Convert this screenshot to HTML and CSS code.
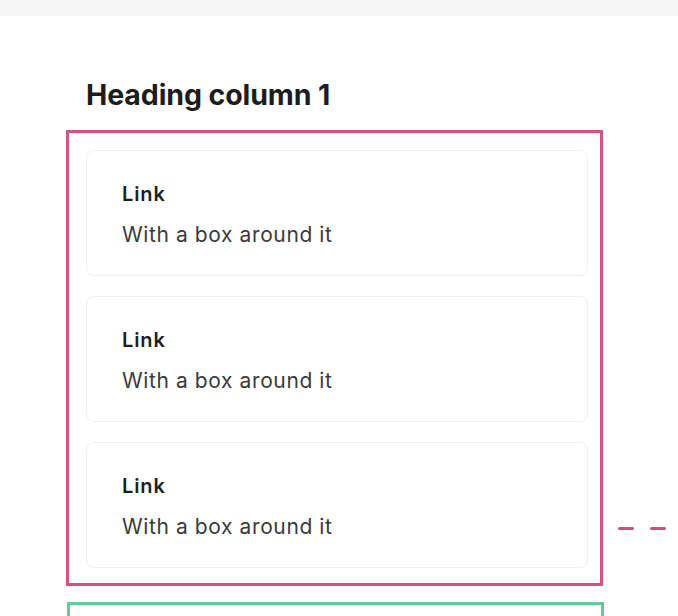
FILE: index.html
```html
<!DOCTYPE html>
<html lang="en">
<head>
<meta charset="utf-8">
<link rel="stylesheet" href="styles.css">
</head>
<body>
<div class="topbar"></div>
<main class="content">
  <h2 class="heading">Heading column 1</h2>
  <div class="row">
    <div class="box box-pink">
      <a class="card" href="#"><span class="card-title">Link</span><span class="card-text">With a box around it</span></a>
      <a class="card" href="#"><span class="card-title">Link</span><span class="card-text">With a box around it</span></a>
      <a class="card" href="#"><span class="card-title">Link</span><span class="card-text">With a box around it</span></a>
    </div>
    <div class="connector"><span class="dash"></span><span class="dash"></span></div>
  </div>
  <div class="box box-green"></div>
</main>
</body>
</html>
```
FILE: styles.css
```css
html, body {
  margin: 0;
  padding: 0;
  background: #ffffff;
  overflow: hidden;
  height: 616px;
}
body {
  font-family: Inter, "Noto Sans", sans-serif;
  color: #1e1e1e;
}
.topbar {
  height: 16px;
  background: #f5f5f5;
}
.content {
  padding-left: 66px;
  width: 537px;
}
.heading {
  margin: 62px 0 0 20px;
  font-size: 28.5px;
  line-height: 34px;
  font-weight: 700;
  letter-spacing: -0.1px;
  color: #1c1c1c;
}
.row {
  display: flex;
  align-items: flex-end;
  margin-top: 18px;
}
.box {
  box-sizing: border-box;
  width: 537px;
  flex: none;
}
.box-pink {
  border: 3px solid #d5547f;
  padding: 17px 12px 15px 17px;
  display: flex;
  flex-direction: column;
  gap: 20px;
}
.card {
  display: flex;
  flex-direction: column;
  height: 126px;
  box-sizing: border-box;
  border: 1px solid #efefef;
  border-radius: 8px;
  padding: 31px 0 0 35px;
  text-decoration: none;
  gap: 16px;
}
.card-title {
  font-size: 20px;
  line-height: 24px;
  font-weight: 600;
  color: #1e1e1e;
  letter-spacing: 0.9px;
}
.card-text {
  font-size: 21px;
  line-height: 26px;
  font-weight: 400;
  color: #3a3a3a;
  letter-spacing: 0.6px;
}
.connector {
  display: flex;
  gap: 16px;
  margin: 0 0 56px 15px;
}
.dash {
  width: 16px;
  height: 3px;
  border-radius: 2px;
  background: #cf4f7c;
}
.box-green {
  margin-top: 16px;
  margin-left: 1px;
  height: 80px;
  border: 3px solid #6cc59b;
  border-bottom: none;
}
```
